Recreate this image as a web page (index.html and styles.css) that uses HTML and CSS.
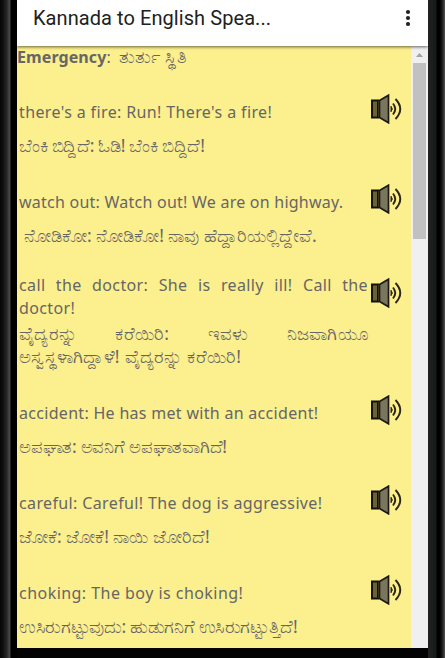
FILE: index.html
```html
<!DOCTYPE html>
<html lang="en">
<head>
    <meta charset="UTF-8">
    <meta name="viewport" content="width=device-width, initial-scale=1.0">
    <title>Kannada to English Speaking</title>
    <link rel="stylesheet" href="styles.css">
</head>
<body>
    <svg class="defs" width="0" height="0">
        <symbol id="speaker" viewBox="0 0 31 30">
            <path d="M1 6.500h6v17H1z" fill="#6b6238" stroke="#14120a" stroke-width="2"/>
            <path d="M7 7.500l2-1.500v18l-2-1.500z" fill="#4b4528"/>
            <path d="M8.500 6.500L17.500 1.200v27.600L8.500 23.500z" fill="#7a765d" stroke="#1c1a12" stroke-width="1.700"/>
            <path d="M20 12.300q2.600 2.700 0 5.400z" fill="#2b2716" stroke="#2b2716"/>
            <path d="M22 9.500q4.500 5.500 0 11M24.500 5q9.500 10 0 20" fill="none" stroke="#2b2716" stroke-width="1.900"/>
        </symbol>
    </svg>
    <div class="phone">
        <div class="edge-left"></div>
        <div class="screen">
            <header class="toolbar">
                <h1>Kannada to English Spea...</h1>
                <svg class="menu" width="6" height="18" viewBox="0 0 6 18">
                    <circle cx="3" cy="3" r="2.100"/>
                    <circle cx="3" cy="9" r="2.100"/>
                    <circle cx="3" cy="15" r="2.100"/>
                </svg>
            </header>
            <main class="content">
                <div class="page">
                    <h2><b>Emergency</b>:  <span class="kn">ತುರ್ತು ಸ್ಥಿತಿ</span></h2>
                    <div class="row fire">
                        <div class="text">
                            <p>there's a fire: Run! There's a fire!</p>
                            <p class="kn">ಬೆಂಕಿ ಬಿದ್ದಿದೆ: ಓಡಿ! ಬೆಂಕಿ ಬಿದ್ದಿದೆ!</p>
                        </div>
                        <svg class="speaker"><use href="#speaker"/></svg>
                    </div>
                    <div class="row watch">
                        <div class="text">
                            <p>watch out: Watch out! We are on highway.</p>
                            <p class="kn indent">ನೋಡಿಕೋ: ನೋಡಿಕೋ! ನಾವು ಹೆದ್ದಾರಿಯಲ್ಲಿದ್ದೇವೆ.</p>
                        </div>
                        <svg class="speaker"><use href="#speaker"/></svg>
                    </div>
                    <div class="row tall">
                        <div class="text">
                            <p>call the doctor: She is really ill! Call the doctor!</p>
                            <p class="kn"><span class="full">ವೈದ್ಯರನ್ನು ಕರೆಯಿರಿ: ಇವಳು ನಿಜವಾಗಿಯೂ</span> ಅಸ್ವಸ್ಥಳಾಗಿದ್ದಾಳೆ! ವೈದ್ಯರನ್ನು ಕರೆಯಿರಿ!</p>
                        </div>
                        <svg class="speaker"><use href="#speaker"/></svg>
                    </div>
                    <div class="row accident">
                        <div class="text">
                            <p>accident: He has met with an accident!</p>
                            <p class="kn">ಅಪಘಾತ: ಅವನಿಗೆ ಅಪಘಾತವಾಗಿದೆ!</p>
                        </div>
                        <svg class="speaker"><use href="#speaker"/></svg>
                    </div>
                    <div class="row careful">
                        <div class="text">
                            <p>careful: Careful! The dog is aggressive!</p>
                            <p class="kn">ಜೋಕೆ: ಜೋಕೆ! ನಾಯಿ ಜೋರಿದೆ!</p>
                        </div>
                        <svg class="speaker"><use href="#speaker"/></svg>
                    </div>
                    <div class="row choking">
                        <div class="text">
                            <p>choking: The boy is choking!</p>
                            <p class="kn">ಉಸಿರುಗಟ್ಟುವುದು: ಹುಡುಗನಿಗೆ ಉಸಿರುಗಟ್ಟುತ್ತಿದೆ!</p>
                        </div>
                        <svg class="speaker"><use href="#speaker"/></svg>
                    </div>
                </div>
                <div class="scrollbar">
                    <svg class="up" width="7" height="4"><path d="M3.500 0L7 4H0z"/></svg>
                    <div class="thumb"></div>
                    <svg class="down" width="7" height="4"><path d="M0 0h7L3.500 4z"/></svg>
                </div>
            </main>
        </div>
        <div class="edge-right"></div>
    </div>
</body>
</html>
```
FILE: styles.css
```css
* { box-sizing: border-box; }
body { margin: 0; background: #030303; font-family: "Noto Sans", "Liberation Sans", sans-serif; overflow: hidden; }
.defs { display: block; }
.phone { display: flex; width: 445px; height: 658px; }
.edge-left { width: 17px; background: linear-gradient(to right, #050505 0, #101010 3px, #292929 7px, #444 9px, #444 10px, #000 11px); }
.edge-right { width: 17px; background: linear-gradient(to right, #202322 0, #161918 8px, #000 9px, #000 12px, #292929 15px, #555 17px); }
.screen { width: 411px; height: 648px; display: flex; flex-direction: column; background: #fcef8d; overflow: hidden; }

.toolbar { position: relative; display: flex; align-items: center; justify-content: space-between; flex: none; width: 411px; height: 46px; padding: 0 17px 10px 16px; background: #fff; box-shadow: 0 1px 3px rgba(0, 0, 0, 0.6); }
.toolbar h1 { margin: 0; font: 400 20px/36px Roboto, sans-serif; letter-spacing: 0.07px; color: #212121; white-space: nowrap; }
.menu { fill: #212121; }

.content { display: flex; flex: 1; }
.page { width: 394px; color: #666; font-size: 16px; line-height: 23px; letter-spacing: 0.37px; }
.page h2 { height: 23px; margin: -1px 0 33px; font-size: 16px; font-weight: normal; line-height: 23px; letter-spacing: 0.1px; white-space: pre-wrap; }
.row { display: flex; align-items: flex-start; margin-bottom: 34px; padding-left: 2px; }
.text { width: 349px; margin-right: 3px; text-align: justify; }
.text p { margin: 0 0 10px; }
.text p:last-child { margin-bottom: 0; }
.kn { font-size: 17.5px; letter-spacing: 0; }
.indent { padding-left: 5px; }
.full { display: block; text-align-last: justify; }
.speaker { flex: none; width: 31px; height: 30px; margin-top: -7px; }
.row.tall { margin-top: -7px; }
.tall .text p:first-child { margin-bottom: 2px; }
.tall .speaker { margin-top: 4px; }

/* tracking per phrase */
.fire .kn { letter-spacing: -0.3px; }
.watch { letter-spacing: 0.24px; }
.tall .kn { letter-spacing: 0.25px; }
.accident { letter-spacing: 0.3px; }
.accident .kn { letter-spacing: -0.25px; }
.choking { letter-spacing: 0.46px; }
.choking .kn { letter-spacing: -0.35px; }

.scrollbar { display: flex; flex-direction: column; align-items: center; width: 17px; padding: 7px 0; background: #f0f0f0; }
.up { fill: #a3a3a3; }
.thumb { width: 13px; height: 176px; margin-top: 6px; background: #c1c1c1; }
.down { margin-top: auto; fill: #505050; }
```
